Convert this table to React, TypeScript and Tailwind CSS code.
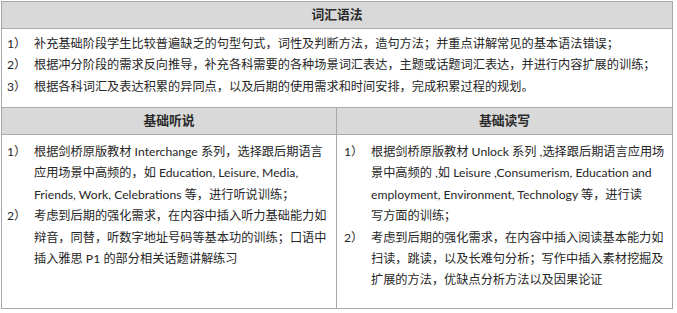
import React from 'react';

const font = { fontFamily: '"Lato", "Noto Sans CJK SC", sans-serif' };

type Item = { no: string; lines: string[] };

const grammar: Item[] = [
  { no: '1）', lines: ['补充基础阶段学生比较普遍缺乏的句型句式，词性及判断方法，造句方法；并重点讲解常见的基本语法错误；'] },
  { no: '2）', lines: ['根据冲分阶段的需求反向推导，补充各科需要的各种场景词汇表达，主题或话题词汇表达，并进行内容扩展的训练；'] },
  { no: '3）', lines: ['根据各科词汇及表达积累的异同点，以及后期的使用需求和时间安排，完成积累过程的规划。'] },
];

const listening: Item[] = [
  {
    no: '1）',
    lines: [
      '根据剑桥原版教材 Interchange 系列，选择跟后期语言',
      '应用场景中高频的，如 Education, Leisure, Media,',
      'Friends, Work, Celebrations 等，进行听说训练；',
    ],
  },
  {
    no: '2）',
    lines: [
      '考虑到后期的强化需求，在内容中插入听力基础能力如',
      '辩音，同替，听数字地址号码等基本功的训练；口语中',
      '插入雅思 P1 的部分相关话题讲解练习',
    ],
  },
];

const reading: Item[] = [
  {
    no: '1）',
    lines: [
      '根据剑桥原版教材 Unlock 系列 ,选择跟后期语言应用场',
      '景中高频的 ,如 Leisure ,Consumerism, Education and',
      'employment, Environment, Technology 等，进行读',
      '写方面的训练；',
    ],
  },
  {
    no: '2）',
    lines: [
      '考虑到后期的强化需求，在内容中插入阅读基本能力如',
      '扫读，跳读，以及长难句分析；写作中插入素材挖掘及',
      '扩展的方法，优缺点分析方法以及因果论证',
    ],
  },
];

const ItemList: React.FC<{ items: Item[] }> = ({ items }) => (
  <div className="flex flex-col">
    {items.map((item) => (
      <div key={item.no} className="flex">
        <span className="w-[27px] shrink-0">{item.no}</span>
        <div className="flex flex-col">
          {item.lines.map((line, i) => (
            <span key={i} className="whitespace-nowrap">{line}</span>
          ))}
        </div>
      </div>
    ))}
  </div>
);

const Head: React.FC<{ title: string }> = ({ title }) => (
  <div className="h-[27px] bg-[#d9d9d9] border-b border-[#a8a8a8] flex items-center justify-center font-bold text-[#2b2b2b] text-[12.8px]">
    {title}
  </div>
);

export default function App() {
  return (
    <div className="w-[677px] h-[313px] bg-white pt-[1px] pl-[1px]" style={font}>
      <div className="w-[672px] border border-[#a8a8a8] text-[12.2px] leading-[21.4px] text-[#262626]">
        <Head title="词汇语法" />
        <div className="h-[79px] pt-[4px] pl-[5px] border-b border-[#a8a8a8]">
          <ItemList items={grammar} />
        </div>
        <div className="grid grid-cols-[335px_1fr]">
          <div className="border-r border-[#a8a8a8]">
            <Head title="基础听说" />
            <div className="h-[173px] pt-[6px] pl-[5px]">
              <ItemList items={listening} />
            </div>
          </div>
          <div>
            <Head title="基础读写" />
            <div className="h-[173px] pt-[6px] pl-[7px]">
              <ItemList items={reading} />
            </div>
          </div>
        </div>
      </div>
    </div>
  );
}
